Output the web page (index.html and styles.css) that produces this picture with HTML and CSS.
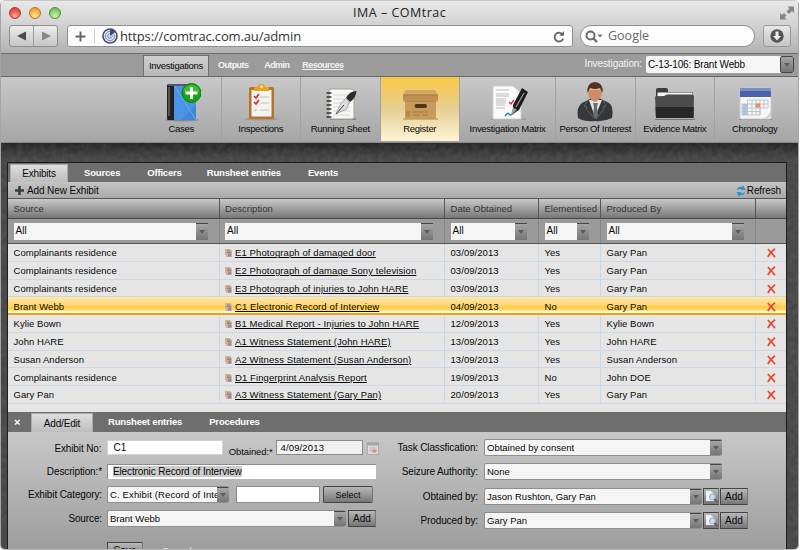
FILE: index.html
```
<!DOCTYPE html>
<html lang="en">
<head>
<meta charset="utf-8">
<title>IMA - COMtrac</title>
<link rel="stylesheet" href="styles.css">
</head>
<body>
<div class="window">
  <header class="chrome">
    <div class="titlebar">
      <div class="lights"><i class="red"></i><i class="amber"></i><i class="green"></i></div>
      <div class="title">IMA – COMtrac</div>
      <svg class="expand" width="14" height="14" viewBox="0 0 14 14" fill="#858585"><path d="M7.500 .5H14V7l-2-2-3 3L6.500 5.500l3-3zM6.500 13.500H0V7l2 2 2-2 2.500 2.500-2 2z"/></svg>
    </div>
    <div class="navrow">
      <div class="history">
        <span><svg width="10" height="10" viewBox="0 0 10 10"><path d="M9 .5v9L0 5z" fill="#4b4b4b"/></svg></span>
        <span><svg width="10" height="10" viewBox="0 0 10 10"><path d="M1 .5v9L10 5z" fill="#888"/></svg></span>
      </div>
      <div class="address">
        <svg class="plus" width="11" height="11" viewBox="0 0 11 11"><path d="M5.500 .5v10M.5 5.500h10" stroke="#666" stroke-width="2"/></svg>
        <i class="sep"></i>
        <svg class="fav" width="16" height="16" viewBox="0 0 16 16"><circle cx="8" cy="8" r="7" fill="#e9edf5" stroke="#3d4c7c" stroke-width="1.600"/><circle cx="8" cy="8" r="4.600" fill="none" stroke="#7180a6"/><circle cx="8" cy="8" r="2.300" fill="none" stroke="#7180a6"/><path d="M8 8V1a7 7 0 0 1 5.500 2.700z" fill="#3d4c7c"/><path d="M2 8h12M8 8v6" stroke="#aab4cc" stroke-width=".6"/></svg>
        <span class="url">https://comtrac.com.au/admin</span>
        <svg class="reload" width="12" height="13" viewBox="0 0 12 13"><path d="M10 5.200A4.400 4.400 0 1 0 10.200 8.500" fill="none" stroke="#666" stroke-width="1.800"/><path d="M6.200 5.800H11V1z" fill="#666"/></svg>
      </div>
      <div class="search">
        <svg width="19" height="13" viewBox="0 0 19 13"><circle cx="5.500" cy="5.500" r="4" fill="none" stroke="#6b6b6b" stroke-width="2"/><path d="M8.500 8.500l3.500 3.500" stroke="#6b6b6b" stroke-width="2.400"/><path d="M12.500 4.500h5l-2.500 3z" fill="#6b6b6b"/></svg>
        <span>Google</span>
      </div>
      <div class="download"><svg width="14" height="14" viewBox="0 0 14 14"><circle cx="7" cy="7" r="6.700" fill="#555"/><path d="M5.500 2.500h3V7H11l-4 4.500L3 7h2.500z" fill="#eee"/></svg></div>
    </div>
  </header>

  <nav class="menu">
    <a class="on">Investigations</a><a>Outputs</a><a>Admin</a><a class="u">Resources</a>
    <label>Investigation:</label>
    <div class="select case"><span>C-13-106: Brant Webb</span><b></b></div>
  </nav>

  <div class="tools">
    <div class="tool">
      <svg width="40" height="40" viewBox="0 0 40 40"><ellipse cx="21" cy="38" rx="17" ry="1.500" fill="#888"/><path d="M6 3h29v35H6z" fill="#4387d8"/><path d="M13 3h22v20L20 38H13z" fill="#4b93e6"/><path d="M13 3l22 35" stroke="#6baaf0" stroke-width="1"/><path d="M6 3h7v35H7q-1 0-1-2z" fill="#222"/><path d="M7 5h2v29H7z" fill="#555"/><path d="M6 2h29v2H8z" fill="#557"/><circle cx="30.500" cy="11" r="9.500" fill="#16a516" stroke="#087d0b"/><path d="M22 9a9 9 0 0 1 17 0q-8 4-17 0z" fill="#57cf4a" opacity=".6"/><path d="M30.500 5v12M24.500 11h12" stroke="#fff" stroke-width="3"/></svg>
      <span>Cases</span></div>
    <div class="tool">
      <svg width="40" height="40" viewBox="0 0 40 40"><ellipse cx="20" cy="37" rx="17" ry="1.500" fill="#999"/><rect x="8" y="5" width="25" height="32" rx="2" fill="#b4722b"/><path d="M10.500 8h20v26.500h-20z" fill="#f3f3f1"/><path d="M13 9V6q0-1 2-1h2q0-3 3.500-3T24 5h3q1 0 1 1v3z" fill="#eda01d"/><circle cx="20.500" cy="4.800" r="1.500" fill="#fff0b0"/><path d="M19 15h9M19 21h9M19 28h9" stroke="#c4c4c4" stroke-width="1.200"/><path d="M13 14l2 2 3-4M13 20l2 2 3-4" stroke="#e0252d" stroke-width="1.600" fill="none"/><circle cx="14.500" cy="28" r="1.300" fill="#ccc"/></svg>
      <span>Inspections</span></div>
    <div class="tool">
      <svg width="40" height="40" viewBox="0 0 40 40"><path d="M10 36h26v2H10z" fill="#888"/><rect x="9" y="7" width="25" height="30" rx="2" fill="#f7f7f5" stroke="#a9a391"/><path d="M13 13h17M13 17h17M13 21h17M13 25h17M13 29h17M13 33h17" stroke="#d5d5d5"/><path d="M6.500 11h5M6.500 15h5M6.500 19h5M6.500 23h5M6.500 27h5M6.500 31h5M6.500 35h5" stroke="#333" stroke-width="1.600"/><path d="M36.500 9q-7 0-10.500 7l4 4q6-4 6.500-11z" fill="#2c2c2c"/><path d="M26 16.500l3.500 3.500-3 7-10.500 5 5-11z" fill="#dcdcdc" stroke="#888" stroke-width=".6"/><path d="M16 32l8-9" stroke="#444"/></svg>
      <span>Running Sheet</span></div>
    <div class="tool active">
      <svg width="40" height="40" viewBox="0 0 40 40"><path d="M3 36h35v2H3z" fill="#a98440" opacity=".5"/><path d="M5 18h31v19H5z" fill="#c79b5b"/><path d="M6 8h29l3 5v6H3v-6z" fill="#d1a766"/><path d="M3 13h35v5H3z" fill="#be8f4e"/><path d="M3 13h35M4 19h33" stroke="#a67a3b"/><rect x="14.500" y="22" width="12.500" height="4" rx="2" fill="#4f3617"/><path d="M13 30h15M13 33h7M22 33h6M7 29v6M9 29v6" stroke="#a37942"/></svg>
      <span>Register</span></div>
    <div class="tool wide">
      <svg width="40" height="40" viewBox="0 0 40 40"><path d="M3 36h35v2H3z" fill="#999" opacity=".7"/><path d="M5 4h20l8 7v26H5z" fill="#fafafa" stroke="#d0d0d0"/><path d="M8 8h13M8 12h13M8 14h13M8 17h10M8 19h10M8 21h10M8 23h9M8 26h9" stroke="#bbb"/><path d="M21 20l2 2 3-4" stroke="#e0252d" fill="none" stroke-width="1.300"/><path d="M34 6l6 4-9 18-6 4 0-9z" fill="#1c1c1c"/><path d="M36 11l-8 14" stroke="#999" stroke-width="1.300"/><path d="M25 25l4 3-6 5z" fill="#999"/><path d="M17 34q3-4 4-2t4 0" fill="none" stroke="#2683ae" stroke-width="1.500"/></svg>
      <span>Investigation Matrix</span></div>
    <div class="tool">
      <svg width="40" height="40" viewBox="0 0 40 40"><path d="M3 36Q1 25 7 21l10-5h7l10 5q5 3 3 15-8 4-17 3-10 1-17-3z" fill="#36373a"/><path d="M14 18l6 17 7-17z" fill="#e3e5e8"/><path d="M18 21h5l-1 4 1 8-2 4-3-4 1-8z" fill="#66716c"/><path d="M13 18l-4 6 3 1-1 2 9 10M28 18l3 6-3 1 1 2-8 10" fill="none" stroke="#626366"/><path d="M13 8q0 10 7 12 7-2 7-12z" fill="#d08b64"/><path d="M12.500 11Q11 1 20 0q9 1 7.500 11L25 6q-5 2-10 0z" fill="#5a2e17"/></svg>
      <span>Person Of Interest</span></div>
    <div class="tool">
      <svg width="42" height="40" viewBox="0 0 42 40"><path d="M1 37h40v1H1z" fill="#777"/><path d="M2 8q0-2 2-2h8q2 0 2 2v2h25v8H2z" fill="#3c3c3c"/><path d="M3.500 10.500h35v4h-35z" fill="#f4f4f4"/><path d="M1 14.500l9-.5 3-1.500h25q2 0 2 2L39.500 36H2z" fill="#4c4c4c"/><path d="M1.500 25h38.300L39.500 36H2z" fill="#272727"/></svg>
      <span>Evidence Matrix</span></div>
    <div class="tool">
      <svg width="40" height="40" viewBox="0 0 40 40"><path d="M4 37h33v1H4z" fill="#888"/><rect x="5" y="6" width="31" height="31" rx="1" fill="#f6f6f6" stroke="#ccc"/><path d="M5 6h31v9H5z" fill="#4c62ab"/><path d="M5 6h31v3H5z" fill="#7d8dc7"/><path d="M7.500 22h5v11h-5z" fill="#a9c2ee"/><path d="M7 22h18v11H7zM12.500 18v15M17 18v15M21 18v15M25 18v15M29 18v8M33 18v8M12.500 18H33M7 26h26M7 29.500h18M25 22h8" fill="none" stroke="#b5bac8" stroke-width=".8"/><path d="M20.500 21.500h4.500v4h-4.500z" fill="#ef8b62"/><path d="M36 29q-2 5-8 8 6-1 8-3z" fill="#ccc"/></svg>
      <span>Chronology</span></div>
  </div>

  <main class="backdrop">
    <svg class="grain" width="800" height="407"><filter id="noise"><feTurbulence type="fractalNoise" baseFrequency=".18" numOctaves="3" seed="4"/><feColorMatrix values="0 0 0 0 .6  0 0 0 0 .6  0 0 0 0 .6  .9 0 0 0 -.25"/></filter><rect width="800" height="407" filter="url(#noise)"/></svg>
    <section class="panel">
      <div class="tabs">
        <a class="on exh">Exhibits</a><a>Sources</a><a>Officers</a><a>Runsheet entries</a><a>Events</a>
      </div>
      <div class="actions">
        <svg width="9" height="9" viewBox="0 0 9 9"><path d="M4.500 0v9M0 4.500h9" stroke="#3c3c3c" stroke-width="2.600"/></svg><span>Add New Exhibit</span>
        <svg class="sync" width="10" height="12" viewBox="0 0 10 12"><path d="M1 5q1-4 5-3l1-2 2.500 5H4.500l1-1Q3 3.500 1 5zM9 7q-1 4-5 3l-1 2L.5 7h5l-1 1.500Q7 8.500 9 7z" fill="#2793cf"/></svg><span class="refresh">Refresh</span>
      </div>
      <div class="row head"><div>Source</div><div>Description</div><div>Date Obtained</div><div>Elementised</div><div>Produced By</div><div></div></div>
      <div class="row filter">
        <div><p class="select"><span>All</span><b></b></p></div><div><p class="select"><span>All</span><b></b></p></div><div><p class="select"><span>All</span><b></b></p></div><div><p class="select"><span>All</span><b></b></p></div><div><p class="select"><span>All</span><b></b></p></div><div></div>
      </div>
      <div id="rows"></div>
      <div class="blank"></div>
      <div class="tabs lower"><i>×</i><a class="on add">Add/Edit</a><a>Runsheet entries</a><a>Procedures</a></div>
      <div class="form">
        <div class="left">
          <div class="line l1"><label>Exhibit No:</label><div class="input no">C1</div><label class="obt">Obtained:*</label><div class="input date">4/09/2013</div>
            <svg class="cal" width="12" height="13" viewBox="0 0 12 13"><rect x=".5" y="1" width="11" height="11.500" fill="#ddd" stroke="#aaa"/><path d="M0 .5h12v3H0z" fill="#aaa3a3"/><path d="M2 6h8M2 8.500h8M4 4v7M7 4v7" stroke="#b5b5b5" stroke-width=".7"/><path d="M5.500 7.500h4v3h-4z" fill="#df8574"/></svg></div>
          <div class="line l2"><label>Description:*</label><div class="input desc"><mark>Electronic Record of Interview</mark></div></div>
          <div class="line l3"><label>Exhibit Category:</label><div class="select cat"><span>C. Exhibit (Record of Inte</span><b></b></div><div class="input extra"></div><div class="btn sel">Select</div></div>
          <div class="line l4"><label>Source:</label><div class="select src"><span>Brant Webb</span><b></b></div><div class="btn">Add</div></div>
          <div class="line l5"><div class="btn save">Save</div><span>Cancel</span></div>
        </div>
        <div class="right">
          <div class="line"><label>Task Classfication:</label><div class="select big"><span>Obtained by consent</span><b></b></div></div>
          <div class="line"><label>Seizure Authority:</label><div class="select big"><span>None</span><b></b></div></div>
          <div class="line"><label>Obtained by:</label><div class="select mid"><span>Jason Rushton, Gary Pan</span><b></b></div><div class="btn find"><svg width="13" height="13" viewBox="0 0 13 13"><path d="M1 1h5l3 3v7H1z" fill="#eef1f6"/><circle cx="7.500" cy="7" r="3" fill="#c9dcf2" stroke="#9badc2"/><path d="M9.500 9l3 3" stroke="#555" stroke-width="1.500"/></svg></div><div class="btn">Add</div></div>
          <div class="line"><label>Produced by:</label><div class="select mid"><span>Gary Pan</span><b></b></div><div class="btn find"><svg width="13" height="13" viewBox="0 0 13 13"><path d="M1 1h5l3 3v7H1z" fill="#eef1f6"/><circle cx="7.500" cy="7" r="3" fill="#c9dcf2" stroke="#9badc2"/><path d="M9.500 9l3 3" stroke="#555" stroke-width="1.500"/></svg></div><div class="btn">Add</div></div>
        </div>
      </div>
    </section>
  </main>
</div>
<script src="rows.js"></script>
</body>
</html>
```
FILE: rows.js
```
const exhibits = [
  ["Complainants residence", "E1 Photograph of damaged door", "03/09/2013", "Yes", "Gary Pan"],
  ["Complainants residence", "E2 Photograph of damage Sony television", "03/09/2013", "Yes", "Gary Pan"],
  ["Complainants residence", "E3 Photograph of injuries to John HARE", "03/09/2013", "Yes", "Gary Pan"],
  ["Brant Webb", "C1 Electronic Record of Interview", "04/09/2013", "No", "Gary Pan"],
  ["Kylie Bown", "B1 Medical Report - Injuries to John HARE", "12/09/2013", "Yes", "Kylie Bown"],
  ["John HARE", "A1 Witness Statement (John HARE)", "13/09/2013", "Yes", "John HARE"],
  ["Susan Anderson", "A2 Witness Statement (Susan Anderson)", "13/09/2013", "Yes", "Susan Anderson"],
  ["Complainants residence", "D1 Fingerprint Analysis Report", "19/09/2013", "No", "John DOE"],
  ["Gary Pan", "A3 Witness Statement (Gary Pan)", "20/09/2013", "Yes", "Gary Pan"]
];
const doc = '<svg width="7" height="8" viewBox="0 0 7 8"><path d="M0 0h5l2 2v6H1V6H0z" fill="#cdb195"/><path d="M2 2h3M2 3.500h4" stroke="#8a7568" stroke-width=".8"/><path d="M3 4.500h3v3H3z" fill="#9a7fc4"/></svg>';
const cross = '<svg width="9" height="10" viewBox="0 0 9 10"><path d="M.8 1.200Q4 4 8 9.200M8 .8Q3.500 4 .8 9" fill="none" stroke="#e8492f" stroke-width="1.700"/></svg>';
document.getElementById("rows").innerHTML = exhibits.map(e =>
  `<div class="row data${e[1].startsWith("C1") ? " picked" : ""}"><div>${e[0]}</div><div>${doc}<u>${e[1]}</u></div><div>${e[2]}</div><div>${e[3]}</div><div>${e[4]}</div><div>${cross}</div></div>`
).join("");
```
FILE: styles.css
```
* { box-sizing: border-box; }
body { margin: 0; width: 800px; height: 550px; overflow: hidden; background: #fff; font: 9.5px/12px "Liberation Sans", Arial, sans-serif; color: #080808; }
svg { display: block; flex: none; }
p { margin: 0; }
.window { width: 799px; height: 550px; border: 1px solid #a5a5a5; border-top-color: #c8c8c8; border-bottom-color: #b8b8b8; border-radius: 5px; overflow: hidden; display: flex; flex-direction: column; }

.chrome { flex: none; height: 53px; background: linear-gradient(#e8e8e8, #d0d0d0 50%, #b2b2b2); border-bottom: 1px solid #6e6e6e; }
.titlebar { display: flex; height: 24px; align-items: center; padding: 0 4px 0 8px; justify-content: space-between; }
.lights { display: flex; gap: 8px; width: 60px; }
.lights i { width: 12px; height: 12px; border-radius: 50%; border: 1px solid; }
.lights .red { background: radial-gradient(circle at 50% 80%, #ffa49b, #e9473f 70%); border-color: #a83b34; }
.lights .amber { background: radial-gradient(circle at 50% 80%, #ffe39a, #eba638 70%); border-color: #ac7428; }
.lights .green { background: radial-gradient(circle at 50% 80%, #cdf5ae, #7bc35d 70%); border-color: #528a3c; }
.title { font: 12.5px/16px "Open Sans", sans-serif; letter-spacing: .5px; color: #222; padding-left: 14px; width: 125px; white-space: nowrap; }
.expand { margin-left: 46px; }
.navrow { display: flex; height: 23px; padding-left: 8px; }
.history { display: flex; width: 49px; height: 22px; border: 1px solid #8e8e8e; border-radius: 3px; background: linear-gradient(#ededed, #c6c6c6); }
.history span { flex: 1; display: flex; align-items: center; justify-content: center; }
.history span + span { border-left: 1px solid #9b9b9b; }
.address { display: flex; align-items: center; margin-left: 9px; width: 506px; height: 22px; background: #fdfdfd; border: 1px solid #8f8f8f; border-radius: 3px; padding: 0 7px; }
.sep { width: 1px; height: 14px; background: #ccc; margin: 0 7px 0 8px; }
.url { font: 13px/18px "Open Sans", sans-serif; letter-spacing: -.15px; color: #333; margin-left: 2px; flex: 1; }
.search { display: flex; align-items: center; margin-left: 7px; width: 175px; height: 22px; border: 1px solid #8f8f8f; border-radius: 11px; background: #fdfdfd; padding-left: 4px; font: 12.5px/18px "Open Sans", sans-serif; color: #686868; gap: 4px; }
.download { margin-left: 8px; width: 28px; height: 22px; border: 1px solid #9a9a9a; border-radius: 3px; background: linear-gradient(#e8e8e8, #c6c6c6); display: flex; align-items: center; justify-content: center; }

.menu { flex: none; height: 23px; background: #9b9b9b; border-bottom: 1px solid #666; display: flex; padding-left: 142px; color: #f3f3f3; align-items: flex-start; }
.menu a { font-weight: bold; font-size: 9px; letter-spacing: -.6px; line-height: 22px; margin-left: 9px; white-space: nowrap; }
.menu .on { margin: 1px 0 0; width: 66px; height: 21px; border: 1px solid #6f6f6f; border-bottom: 0; background: linear-gradient(#d0d0d0, #b8b8b8); color: #080808; font-weight: normal; font-size: 9.5px; text-align: center; letter-spacing: -.28px; line-height: 20px; }
.menu a:nth-child(3) { margin-left: 16px; }
.menu .u { margin-left: 13px; text-decoration: underline; letter-spacing: -.55px; }
.menu label { margin: 4px 4px 0 auto; font-size: 10px; letter-spacing: -.1px; white-space: nowrap; }
.select { display: flex; background: #f5f5f5; height: 16px; color: #080808; overflow: hidden; border-radius: 2px; }
.select span { flex: 1; min-width: 0; padding-left: 2px; white-space: nowrap; line-height: 16px; }
.select b { flex: none; width: 12px; background: linear-gradient(#a5a5a5, #757575); border-top: 1px solid #444; display: flex; align-items: center; justify-content: center; position: relative; }
.select b::before { content: ""; border: 3px solid transparent; border-top: 4px solid #5c5c5c; border-bottom: 0; }
.menu .case { margin: 2px 4px 0 0; width: 148px; height: 17px; font-size: 10px; letter-spacing: -.15px; }
.menu .case span { line-height: 17px; }
.case b { width: 14px; border: 1px solid #444; border-radius: 2px; }

.tools { flex: none; display: flex; height: 66px; padding-left: 141px; background: linear-gradient(#c8c8c8, #a6a6a6); border-bottom: 1px solid #8a8a8a; }
.tool { flex: none; width: 79.500px; height: 64px; border-right: 1px solid #a2a2a2; display: flex; flex-direction: column; align-items: center; padding-top: 5px; }
.tool span { white-space: nowrap; margin-top: 1px; letter-spacing: -.3px; }
.tool:last-child { border: 0; }
.tool.active { background: linear-gradient(#f9c945, #e5cf92 50%, #fdf3d6); }
.tool.wide { width: 96px; }

.backdrop { flex: 1; min-height: 0; position: relative; background: linear-gradient(#252525, #464646 16px); padding: 19px 0 0 6px; }
.grain { position: absolute; left: 0; top: 0; opacity: .2; }
.panel { position: relative; width: 780px; height: 388px; border: 1px solid #1d1d1d; background: #e5e5e5; overflow: hidden; }
.tabs { display: flex; height: 19px; background: #6e6e6e; color: #fff; padding-left: 2px; }
.tabs a { font-weight: bold; line-height: 20px; margin-right: 27px; white-space: nowrap; letter-spacing: -.18px; }
.tabs .on { font-weight: normal; color: #080808; background: linear-gradient(#dedede, #bdbdbd); border: 1px solid #aaa; border-bottom: 0; margin-top: 1px; height: 18px; line-height: 18px; text-align: center; font-size: 10px; }
.tabs .exh { width: 58px; margin-right: 16px; }
.tabs a:nth-child(3) { margin-right: 25px; }
.actions { display: flex; align-items: center; height: 17px; background: linear-gradient(#c4c4c4, #aaa); padding: 1px 5px 0 7px; border-bottom: 1px solid #555; font-size: 10px; letter-spacing: -.12px; }
.actions span { margin-left: 3px; }
.actions .sync { margin-left: auto; }
.actions .refresh { margin-left: 1px; }
.row { display: grid; grid-template-columns: 212px 225px 94px 62px 155px 30px; }
.row > div { padding-left: 5.500px; border-right: 1px solid #ccd6e5; display: flex; align-items: center; white-space: nowrap; min-width: 0; }
.row > div:last-child { border-right: 0; padding-left: 11px; }
.row > div:nth-child(2) { padding-left: 5px; }
.head { height: 20px; background: linear-gradient(#c9c9c9, #777); border-bottom: 1px solid #4a4a4a; color: #333; letter-spacing: .03px; }
.head > div { border-color: #555; padding-top: 1px; }
.filter { height: 25px; background: #9a9a9a; border-bottom: 1px solid #555; }
.filter > div { border-color: #858585; }
.filter .select { width: calc(100% - 11px); height: 17px; border-radius: 0; font-size: 10px; }
.data { height: 17.750px; border-bottom: 1px solid #ccd6e5; background: #e5e5e5; letter-spacing: .06px; }
.data > div { padding-top: 2px; }
.data svg { margin-right: 3px; }
.data u { text-underline-offset: 1px; letter-spacing: .1px; }
.picked { background: linear-gradient(#ffe7a6, #fed97e 45%, #fbcd45 65%, #ffe37e 88%, #fffbd8 90%); border-bottom: 2px solid #f49c1b; }
.picked > div { border-color: transparent; padding-top: 3px; }
.blank { height: 8px; }
.lower { height: 20px; padding-left: 6px; }
.lower i { font: bold 11px/20px "Liberation Sans", sans-serif; width: 17px; }
.lower .add { width: 62px; height: 19px; line-height: 19px; margin-right: 15px; }
.lower a:nth-child(3) { margin-right: 27px; }

.form { display: flex; height: 118px; background: linear-gradient(#c8c8c8, #9d9d9d); }
.left { width: 371px; padding-top: 8px; }
.right { padding-top: 7px; display: flex; flex-direction: column; gap: 7.400px; }
.line { display: flex; height: 17px; white-space: nowrap; }
.line label { width: 94px; text-align: right; font-size: 10px; letter-spacing: -.12px; line-height: 17px; }
.left .select, .left .input.no, .input.desc { margin-left: 5px; }
.left .line .input.no { margin-left: 6px; }
.right .line label { width: 99px; line-height: 18px; }
.right .select { margin-left: 6px; }
.form .select { height: 17px; border: solid #8e8e8e; border-width: 1px 0 1px 1px; }
.input { background: #fff; height: 15px; line-height: 13px; padding-left: 5px; border: 1px solid #8b8b8b; }
.l1 { height: 24px; }
.l1 .no { width: 116px; border-color: #d2d2d2; font-size: 10px; }
.line .obt { width: 50px; line-height: 23px; font-size: 9.500px; }
.l1 .date { margin-left: 4px; width: 87px; background: #f1f1f1; padding-left: 3px; letter-spacing: .15px; }
.cal { margin: 2px 0 0 4px; }
.l2 { height: 22px; }
.l2 label { line-height: 15px; }
.l2 .desc { width: 269px; font-size: 10px; border-right: 0; border-bottom: 0; }
mark { background: #ccc; color: #080808; letter-spacing: -.14px; }
.l3 { height: 24px; }
.left .cat { width: 122px; letter-spacing: .13px; }
.extra { margin-left: 7px; width: 84px; height: 17px; }
.btn { border: 1px solid #444; border-right-color: #777; background: linear-gradient(#b8b8b8, #777); height: 17px; width: 28px; line-height: 16px; text-align: center; font-size: 10px; margin-left: 2px; }
.left .sel { width: 50px; margin-left: 3px; border-radius: 2px; font-size: 9px; }
.l4 { height: 32px; }
.left .src { width: 239px; }
.big { width: 238px; }
.mid { width: 218px; }
.right .find { width: 16px; margin-left: 1px; padding: 1px; }
.right .btn { margin-left: 1px; }
.l5 { padding-left: 99px; }
.l5 .save { margin: 0 19px 0 0; width: 36px; }
.l5 span { color: #eee; line-height: 18px; }
```
